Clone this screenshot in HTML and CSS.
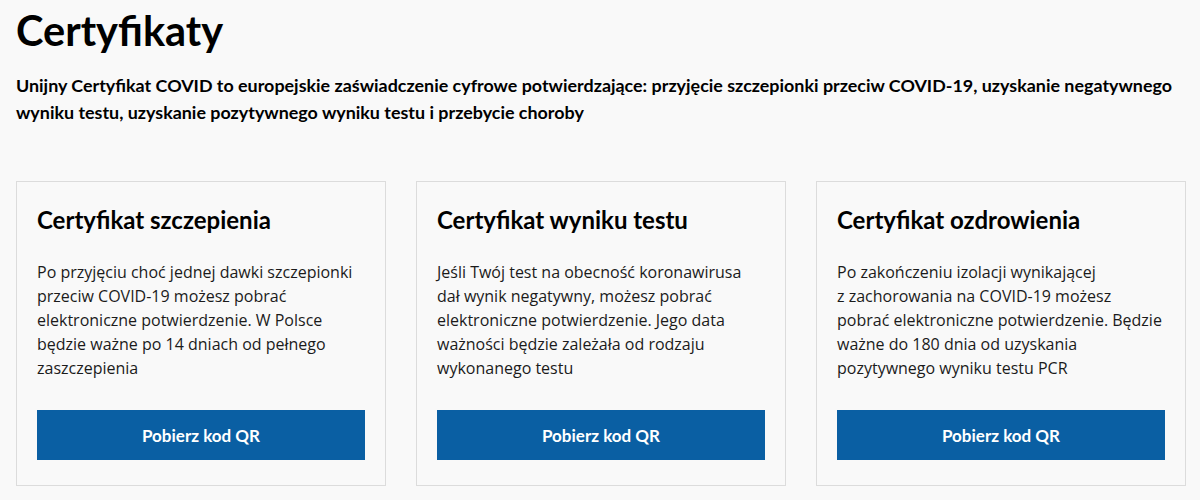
FILE: index.html
```html
<!DOCTYPE html>
<html lang="pl">
<head>
    <meta charset="UTF-8">
    <meta name="viewport" content="width=device-width, initial-scale=1.0">
    <title>Certyfikaty</title>
    <link rel="stylesheet" href="styles.css">
</head>
<body>
    <div class="page">
        <h1 class="page-title">Certyfikaty</h1>
        <p class="page-lead">Unijny Certyfikat COVID to europejskie zaświadczenie cyfrowe potwierdzające: przyjęcie szczepionki przeciw COVID-19, uzyskanie negatywnego wyniku testu, uzyskanie pozytywnego wyniku testu i przebycie choroby</p>

        <div class="cards">
            <div class="card">
                <h2 class="card-title">Certyfikat szczepienia</h2>
                <p class="card-text">Po przyjęciu choć jednej dawki szczepionki przeciw COVID-19 możesz pobrać elektroniczne potwierdzenie. W Polsce będzie ważne po 14 dniach od pełnego zaszczepienia</p>
                <a class="card-button" href="#">Pobierz kod QR</a>
            </div>
            <div class="card">
                <h2 class="card-title">Certyfikat wyniku testu</h2>
                <p class="card-text">Jeśli Twój test na obecność koronawirusa dał wynik negatywny, możesz pobrać elektroniczne potwierdzenie. Jego data ważności będzie zależała od rodzaju wykonanego testu</p>
                <a class="card-button" href="#">Pobierz kod QR</a>
            </div>
            <div class="card">
                <h2 class="card-title">Certyfikat ozdrowienia</h2>
                <p class="card-text">Po zakończeniu izolacji wynikającej z&nbsp;zachorowania na COVID-19 możesz pobrać elektroniczne potwierdzenie. Będzie ważne do 180 dnia od uzyskania pozytywnego wyniku testu PCR</p>
                <a class="card-button" href="#">Pobierz kod QR</a>
            </div>
        </div>
    </div>
</body>
</html>
```

FILE: styles.css
```css
body {
    margin: 0;
    padding: 0;
    background-color: #f9f9f9;
    color: #1b1b1b;
    font-family: "Open Sans", Arial, sans-serif;
}

.page {
    width: 1170px;
    padding: 6px 0 0 16px;
}

.page-title {
    margin: 0;
    font-family: Lato, "Noto Sans", sans-serif;
    font-size: 41.5px;
    line-height: 48px;
    font-weight: 700;
    color: #000;
}

.page-lead {
    margin: 18px 0 0;
    font-family: Lato, "Noto Sans", sans-serif;
    font-size: 17.9px;
    line-height: 27px;
    font-weight: 700;
    color: #000;
}

.cards {
    display: grid;
    grid-template-columns: repeat(3, 1fr);
    gap: 30px;
    margin-top: 55px;
}

.card {
    display: flex;
    flex-direction: column;
    border: 1px solid #dcdcdc;
    padding: 22px 20px 25px;
}

.card-title {
    margin: 0;
    font-family: Lato, "Noto Sans", sans-serif;
    font-size: 24px;
    line-height: 32px;
    font-weight: 700;
    color: #000;
}

.card-text {
    margin: 24px 0 30px;
    font-size: 16px;
    line-height: 24px;
}

.card-button {
    display: flex;
    align-items: center;
    justify-content: center;
    height: 50px;
    margin-top: auto;
    background-color: #0a5fa3;
    color: #fff;
    font-family: Lato, "Noto Sans", sans-serif;
    font-size: 17px;
    font-weight: 700;
    text-decoration: none;
}
```
